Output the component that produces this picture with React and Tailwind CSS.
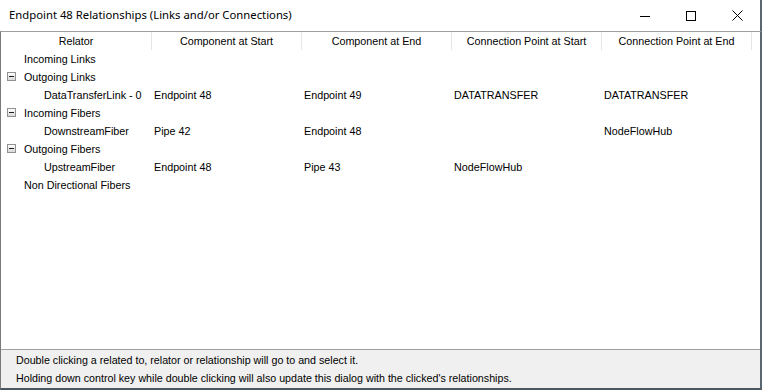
import React from 'react';

const columns = ['Relator', 'Component at Start', 'Component at End', 'Connection Point at Start', 'Connection Point at End'];

const rows = [
    { level: 0, label: 'Incoming Links' },
    { level: 0, label: 'Outgoing Links', open: true },
    { level: 1, label: 'DataTransferLink - 0', cells: ['Endpoint 48', 'Endpoint 49', 'DATATRANSFER', 'DATATRANSFER'] },
    { level: 0, label: 'Incoming Fibers', open: true },
    { level: 1, label: 'DownstreamFiber', cells: ['Pipe 42', 'Endpoint 48', '', 'NodeFlowHub'] },
    { level: 0, label: 'Outgoing Fibers', open: true },
    { level: 1, label: 'UpstreamFiber', cells: ['Endpoint 48', 'Pipe 43', 'NodeFlowHub', ''] },
    { level: 0, label: 'Non Directional Fibers' },
];

function MinusBox() {
    return (
        <span className="absolute left-[6px] top-[4px] w-[9px] h-[9px] border border-[#919191] bg-gradient-to-b from-white to-[#d8d8d8] flex items-center justify-center">
            <span className="w-[5px] h-px bg-[#1e1e1e]" />
        </span>
    );
}

function App() {
    return (
        <div className="w-[762px] h-[390px] flex flex-col bg-white overflow-hidden text-black" style={{ fontFamily: '"Liberation Sans", Arial, sans-serif' }}>
            <div className="h-[31px] flex items-center shrink-0 border-r-2 border-[#5a6670]">
                <span className="pl-[9px] text-[11.3px] flex-1" style={{ fontFamily: '"Noto Sans", sans-serif' }}>
                    Endpoint 48 Relationships (Links and/or Connections)
                </span>
                <div className="flex h-full">
                    <div className="w-[46px] flex items-center justify-center">
                        <svg width="10" height="10" viewBox="0 0 10 10"><path d="M0 5.5h10" stroke="#000" strokeWidth="1" /></svg>
                    </div>
                    <div className="w-[46px] flex items-center justify-center">
                        <svg width="10" height="10" viewBox="0 0 10 10"><rect x="0.5" y="0.5" width="9" height="9" fill="none" stroke="#000" strokeWidth="1" /></svg>
                    </div>
                    <div className="w-[46px] flex items-center justify-center">
                        <svg width="11" height="11" viewBox="0 0 11 11"><path d="M0.5 0.5l10 10M10.5 0.5l-10 10" stroke="#000" strokeWidth="1" /></svg>
                    </div>
                </div>
            </div>
            <div className="flex-1 flex flex-col border-l border-r-2 border-b-2 border-l-[#7a7a7a] border-r-[#5a6670] border-b-[#4a5660] border-t border-t-[#a0a0a0]">
                <div className="flex-1 text-[10.75px]">
                    <div className="grid grid-cols-[151px_150px_150px_150px_150px_1fr] h-[18px] items-center">
                        {columns.map((c) => (
                            <div key={c} className="text-center border-r border-[#e5e5e5] h-full leading-[18px]">{c}</div>
                        ))}
                        <div />
                    </div>
                    {rows.map((r, i) => (
                        <div key={i} className="grid grid-cols-[151px_150px_150px_150px_150px_1fr] h-[18px] leading-[18px] relative">
                            {r.open && <MinusBox />}
                            <div className={r.level === 0 ? 'pl-[23px] whitespace-nowrap' : 'pl-[43px] whitespace-nowrap'}>{r.label}</div>
                            {(r.cells || ['', '', '', '']).map((c, j) => (
                                <div key={j} className="pl-[2px] whitespace-nowrap">{c}</div>
                            ))}
                            <div />
                        </div>
                    ))}
                </div>
                <div className="h-[39px] bg-[#f0f0f0] border-t border-[#a0a0a0] pl-[15px] pt-px text-[10.7px] leading-[18px]">
                    <div>Double clicking a related to, relator or relationship will go to and select it.</div>
                    <div>Holding down control key while double clicking will also update this dialog with the clicked's relationships.</div>
                </div>
            </div>
        </div>
    );
}

export default App;
